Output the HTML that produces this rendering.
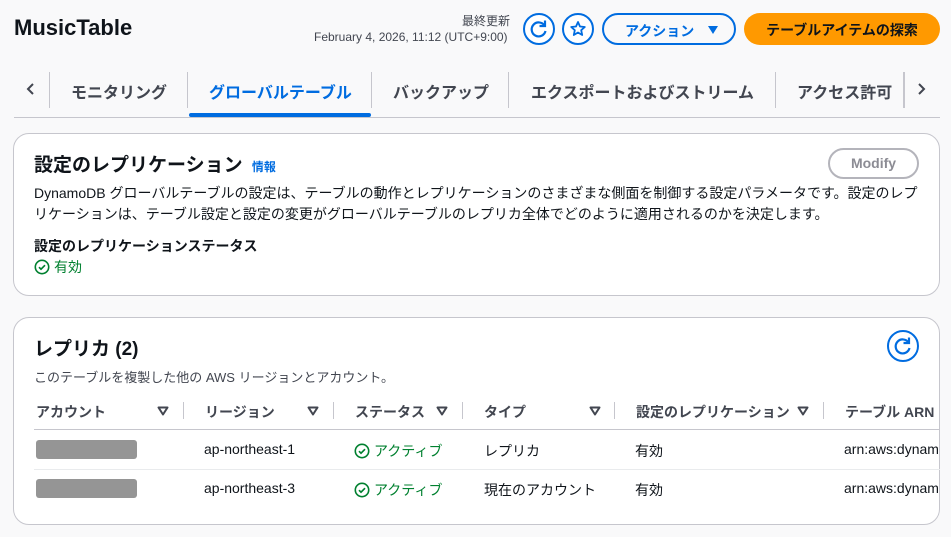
<!DOCTYPE html>
<html><head><meta charset="utf-8"><style>
*{box-sizing:border-box;margin:0;padding:0}
body{width:951px;height:537px;overflow:hidden;background:#f9f9fa;font-family:"Liberation Sans","Noto Sans CJK JP",sans-serif;color:#0f141a;position:relative}
.a{position:absolute;white-space:nowrap}
.card{position:absolute;left:13px;width:927px;background:#fff;border:1px solid #c6c6cd;border-radius:16px}
.circ{position:absolute;width:32px;height:32px;border:2px solid #006ce0;border-radius:50%;background:#fff}
.sep{position:absolute;width:1px;background:#c6c6cd}
.th{font-size:14px;font-weight:bold;color:#424650;top:402px}
.td{font-size:14px;top:441px}
.tri{position:absolute;width:12px;height:10px}
.gray{position:absolute;left:36px;width:101px;height:19px;background:#959595;border-radius:3px}
.green{color:#00802f}
.ck{display:inline-block;vertical-align:-3px;margin-right:4px}
</style></head><body>
<svg width="0" height="0" style="position:absolute"><defs>
<symbol id="ok" viewBox="0 0 16 16"><circle cx="8" cy="8" r="6.7" fill="none" stroke="#00802f" stroke-width="1.6"/><path d="M5 8.2l2 2 4-4" fill="none" stroke="#00802f" stroke-width="1.7"/></symbol>
<symbol id="tr" viewBox="0 0 12 10"><path d="M1.5 1.5h9L6 8.5z" fill="none" stroke="#424650" stroke-width="2" stroke-linejoin="round"/></symbol>
<symbol id="rf" viewBox="0 0 28 28"><path d="M19.5 10.5a7 7 0 1 0 1 5.5" fill="none" stroke="#006ce0" stroke-width="2.2"/><path d="M20 5.5v5.5h-5.5" fill="none" stroke="#006ce0" stroke-width="2.2"/></symbol>
</defs></svg>
<div class="a" style="left:14px;top:15px;font-size:22px;font-weight:bold">MusicTable</div>
<div class="a" style="left:462px;top:12px;font-size:12px;color:#424650">最終更新</div>
<div class="a" style="left:314px;top:30px;font-size:12px;color:#424650">February 4, 2026, 11:12 (UTC+9:00)</div>
<div class="circ" style="left:523px;top:13px"><svg width="28" height="28" style="position:absolute;left:0;top:0"><use href="#rf"/></svg></div>
<div class="circ" style="left:562px;top:13px"><svg width="28" height="28" viewBox="0 0 28 28" style="position:absolute;left:0;top:0"><path d="M14 7l2 4.5 4.8.5-3.6 3.2 1 4.8L14 17.5 9.8 20l1-4.8L7.2 12l4.8-.5z" fill="none" stroke="#006ce0" stroke-width="1.8" stroke-linejoin="round"/></svg></div>
<div class="a" style="left:602px;top:13px;width:134px;height:32px;border:2px solid #006ce0;border-radius:16px;color:#006ce0;font-size:14px;font-weight:bold;padding:6px 0 0 21px">アクション<svg width="12" height="10" viewBox="0 0 12 10" style="position:absolute;left:103px;top:10px"><path d="M1 1h10L6 9z" fill="#006ce0"/></svg></div>
<div class="a" style="left:744px;top:13px;width:196px;height:32px;background:#ff9900;border-radius:16px;font-size:14px;font-weight:bold;text-align:center;padding-top:7px">テーブルアイテムの探索</div>

<svg class="a" style="left:25px;top:82px" width="12" height="14" viewBox="0 0 12 14"><path d="M8 2L3 7l5 5" fill="none" stroke="#424650" stroke-width="2"/></svg>
<div class="sep" style="left:49px;top:72px;height:36px"></div>
<div class="a" style="left:71px;top:79px;font-size:16px;font-weight:bold;color:#424650">モニタリング</div>
<div class="sep" style="left:187px;top:72px;height:36px"></div>
<div class="a" style="left:209px;top:79px;font-size:16px;font-weight:bold;color:#006ce0">グローバルテーブル</div>
<div class="a" style="left:189px;top:113px;width:182px;height:4px;background:#006ce0;border-radius:2px"></div>
<div class="sep" style="left:371px;top:72px;height:36px"></div>
<div class="a" style="left:393px;top:79px;font-size:16px;font-weight:bold;color:#424650">バックアップ</div>
<div class="sep" style="left:508px;top:72px;height:36px"></div>
<div class="a" style="left:531px;top:79px;font-size:16px;font-weight:bold;color:#424650">エクスポートおよびストリーム</div>
<div class="sep" style="left:775px;top:72px;height:36px"></div>
<div class="a" style="left:797px;top:79px;font-size:16px;font-weight:bold;color:#424650">アクセス許可</div>
<div class="sep" style="left:903px;top:72px;height:36px;width:2px"></div>
<svg class="a" style="left:915px;top:82px" width="12" height="14" viewBox="0 0 12 14"><path d="M4 2l5 5-5 5" fill="none" stroke="#424650" stroke-width="2"/></svg>
<div class="a" style="left:14px;top:117px;width:926px;height:1px;background:#c6c6cd"></div>

<div class="card" style="top:133px;height:163px"></div>
<div class="a" style="left:34px;top:150px;font-size:19px;font-weight:bold">設定のレプリケーション <span style="font-size:12px;color:#006ce0;margin-left:4px">情報</span></div>
<div class="a" style="left:828px;top:148px;width:91px;height:31px;border:2px solid #b4b4bb;border-radius:16px;color:#8c8c94;font-size:14px;font-weight:bold;text-align:center;padding-top:5px">Modify</div>
<div class="a" style="left:34px;top:183px;font-size:14px;line-height:21px;white-space:normal;width:890px">DynamoDB グローバルテーブルの設定は、テーブルの動作とレプリケーションのさまざまな側面を制御する設定パラメータです。設定のレプリケーションは、テーブル設定と設定の変更がグローバルテーブルのレプリカ全体でどのように適用されるのかを決定します。</div>
<div class="a" style="left:34px;top:236px;font-size:14px;font-weight:bold">設定のレプリケーションステータス</div>
<div class="a green" style="left:34px;top:257px;font-size:14px"><svg class="ck" width="16" height="16"><use href="#ok"/></svg>有効</div>

<div class="card" style="top:317px;height:208px"></div>
<div class="a" style="left:34px;top:334px;font-size:19px;font-weight:bold">レプリカ (2)</div>
<div class="circ" style="left:887px;top:330px"><svg width="28" height="28" style="position:absolute;left:0;top:0"><use href="#rf"/></svg></div>
<div class="a" style="left:34px;top:367px;font-size:13px;color:#424650">このテーブルを複製した他の AWS リージョンとアカウント。</div>

<div class="a th" style="left:36px">アカウント</div><svg class="tri" style="left:157px;top:406px"><use href="#tr"/></svg><div class="sep" style="left:183px;top:402px;height:17px"></div>
<div class="a th" style="left:205px">リージョン</div><svg class="tri" style="left:307px;top:406px"><use href="#tr"/></svg><div class="sep" style="left:333px;top:402px;height:17px"></div>
<div class="a th" style="left:355px">ステータス</div><svg class="tri" style="left:436px;top:406px"><use href="#tr"/></svg><div class="sep" style="left:462px;top:402px;height:17px"></div>
<div class="a th" style="left:484px">タイプ</div><svg class="tri" style="left:589px;top:406px"><use href="#tr"/></svg><div class="sep" style="left:614px;top:402px;height:17px"></div>
<div class="a th" style="left:636px">設定のレプリケーション</div><svg class="tri" style="left:797px;top:406px"><use href="#tr"/></svg><div class="sep" style="left:823px;top:402px;height:17px"></div>
<div class="a th" style="left:845px">テーブル ARN</div>
<div class="a" style="left:34px;top:429px;width:906px;height:1px;background:#c6c6cd"></div>
<div class="a" style="left:34px;top:469px;width:906px;height:1px;background:#e9ebed"></div>

<div class="gray" style="top:440px"></div>
<div class="a td" style="left:204px">ap-northeast-1</div>
<div class="a td green" style="left:354px"><svg class="ck" width="16" height="16"><use href="#ok"/></svg>アクティブ</div>
<div class="a td" style="left:484px">レプリカ</div>
<div class="a td" style="left:635px">有効</div>
<div class="a td" style="left:844px">arn:aws:dynam</div>

<div class="gray" style="top:479px"></div>
<div class="a td" style="left:204px;top:480px">ap-northeast-3</div>
<div class="a td green" style="left:354px;top:480px"><svg class="ck" width="16" height="16"><use href="#ok"/></svg>アクティブ</div>
<div class="a td" style="left:484px;top:480px">現在のアカウント</div>
<div class="a td" style="left:635px;top:480px">有効</div>
<div class="a td" style="left:844px;top:480px">arn:aws:dynam</div>
</body></html>
